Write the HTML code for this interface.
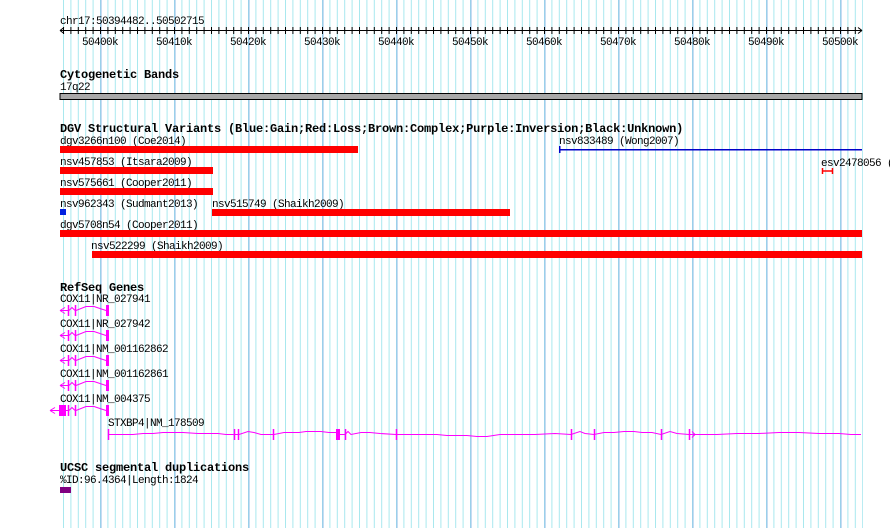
<!DOCTYPE html>
<html><head><meta charset="utf-8"><style>
body{margin:0;background:#fff;}
svg{display:block}
text{font-family:"Liberation Mono","DejaVu Sans Mono",monospace;font-size:11px;letter-spacing:-0.6px;fill:#000}
.b{font-weight:bold;font-size:12px;letter-spacing:-0.2px}
</style></head><body>
<svg width="890" height="528" xmlns="http://www.w3.org/2000/svg">
<defs>
<pattern id="lg" x="63" y="0" width="7.4" height="528" patternUnits="userSpaceOnUse"><rect x="0" y="0" width="1" height="528" fill="#a8e8ee"/></pattern>
<pattern id="dg" x="100.5" y="0" width="74" height="528" patternUnits="userSpaceOnUse"><rect x="0" y="0" width="1" height="528" fill="#8cb8e6"/></pattern>
<pattern id="tk" x="63" y="0" width="7.4" height="528" patternUnits="userSpaceOnUse"><rect x="0" y="27" width="1" height="7" fill="#000"/></pattern>
</defs>
<rect x="60" y="0" width="803" height="528" fill="url(#lg)"/>
<rect x="60" y="0" width="803" height="528" fill="url(#dg)"/>

<text x="60" y="24">chr17:50394482..50502715</text>
<rect x="60" y="30" width="802" height="1" fill="#000"/>
<rect x="60" y="0" width="802" height="40" fill="url(#tk)"/>
<path d="M60 30.5 l4 -3 M60 30.5 l4 3 M862 30.5 l-4 -3 M862 30.5 l-4 3" stroke="#000"/>
<g>
<text x="82" y="45">50400k</text><text x="156" y="45">50410k</text><text x="230" y="45">50420k</text><text x="304" y="45">50430k</text><text x="378" y="45">50440k</text><text x="452" y="45">50450k</text><text x="526" y="45">50460k</text><text x="600" y="45">50470k</text><text x="674" y="45">50480k</text><text x="748" y="45">50490k</text><text x="822" y="45">50500k</text>
</g>

<text class="b" x="60" y="78">Cytogenetic Bands</text>
<text x="60" y="90">17q22</text>
<rect x="60" y="93.5" width="802" height="6" fill="#a8a8a8" stroke="#000" stroke-width="1"/>

<text class="b" x="60" y="132">DGV Structural Variants (Blue:Gain;Red:Loss;Brown:Complex;Purple:Inversion;Black:Unknown)</text>
<text x="60" y="144">dgv3266n100 (Coe2014)</text>
<rect x="60" y="146" width="298" height="7" fill="#f00"/>
<text x="559" y="144">nsv833489 (Wong2007)</text>
<rect x="559" y="149" width="303" height="1.5" fill="#0000c8"/>
<rect x="559" y="146" width="1.5" height="7" fill="#0000c8"/>

<text x="60" y="165">nsv457853 (Itsara2009)</text>
<rect x="60" y="167" width="153" height="7" fill="#f00"/>
<text x="821" y="166">esv2478056 (</text>
<path d="M822.5 168 v6 M832.5 168 v6 M822 171 h11" stroke="#f00" stroke-width="1.5"/>

<text x="60" y="186">nsv575661 (Cooper2011)</text>
<rect x="60" y="188" width="153" height="7" fill="#f00"/>

<text x="60" y="207">nsv962343 (Sudmant2013)</text>
<text x="212" y="207">nsv515749 (Shaikh2009)</text>
<rect x="60" y="209" width="6" height="6" fill="#0020e0"/>
<rect x="212" y="209" width="298" height="7" fill="#f00"/>

<text x="60" y="228">dgv5708n54 (Cooper2011)</text>
<rect x="60" y="230" width="802" height="7" fill="#f00"/>
<text x="91" y="249">nsv522299 (Shaikh2009)</text>
<rect x="92" y="251" width="770" height="7" fill="#f00"/>

<text class="b" x="60" y="291">RefSeq Genes</text>
<g fill="none" stroke="#f0f" stroke-width="1">
<g id="g1">
<path d="M60 310.5 h8 M60 310.5 l5 -3 M60 310.5 l5 3 M69 310.5 l3 -3 l3 3 M76 310.5 l10 -4 h8 l12 4"/>
<path d="M68.5 305 v11 M75.5 305 v11" stroke-width="1.5"/>
<rect x="106" y="305" width="3" height="11" fill="#f0f" stroke="none"/>
</g>
<use href="#g1" y="25"/>
<use href="#g1" y="50"/>
<use href="#g1" y="75"/>
<path d="M50 410.5 h18 M50 410.5 l5 -3 M50 410.5 l5 3 M69 410.5 l3 -3 l3 3 M76 410.5 l10 -4 h8 l12 4"/>
<path d="M68.5 405 v11 M75.5 405 v11" stroke-width="1.5"/>
<rect x="59" y="405" width="7" height="11" fill="#f0f" stroke="none"/>
<rect x="106" y="405" width="3" height="11" fill="#f0f" stroke="none"/>

<polyline points="108,434.5 133,434.5 143,433.5 153,433.5 163,432.5 183,432.5 198,433.5 218,433.5 226,434.5 234,434.5 239,434.5 248,431.5 254,432.5 261,434.5 274,434.5 284,432.5 299,432.5 306,431.5 321,431.5 329,432.5 336,432.5 339,434.5 345,434.5 348,431.5 351,434.5 361,432.5 370,432.5 380,433.5 396,434.5 437,434.5 447,435.5 467,435.5 477,436.5 487,436.5 500,434.5 535,434.5 555,433.5 571,434.5 580,431.5 585,433.5 594,434.5 604,432.5 614,432.5 624,431.5 634,431.5 642,432.5 652,432.5 661,434.5 670,431.5 677,433.5 689,434.5 717,434.5 737,433.5 759,433.5 779,432.5 799,432.5 819,433.5 839,433.5 851,434.5 861,434.5"/>
<path d="M108.5 429 v11 M234.5 429 v11 M238.5 429 v11 M273.5 429 v11 M345.5 429 v11 M396.5 429 v11 M571.5 429 v11 M594.5 429 v11 M661.5 429 v11 M689.5 429 v11" stroke-width="1.5"/>
<path d="M692 431.5 l3 3 l-3 3"/>
<rect x="336" y="429" width="4" height="11" fill="#f0f" stroke="none"/>
</g>
<text x="108" y="426">STXBP4|NM_178509</text>
<text x="60" y="302">COX11|NR_027941</text>
<text x="60" y="327">COX11|NR_027942</text>
<text x="60" y="352">COX11|NM_001162862</text>
<text x="60" y="377">COX11|NM_001162861</text>
<text x="60" y="402">COX11|NM_004375</text>

<text class="b" x="60" y="471">UCSC segmental duplications</text>
<text x="60" y="483">%ID:96.4364|Length:1824</text>
<rect x="60" y="487" width="11" height="6" fill="#800080"/>
</svg>
</body></html>
